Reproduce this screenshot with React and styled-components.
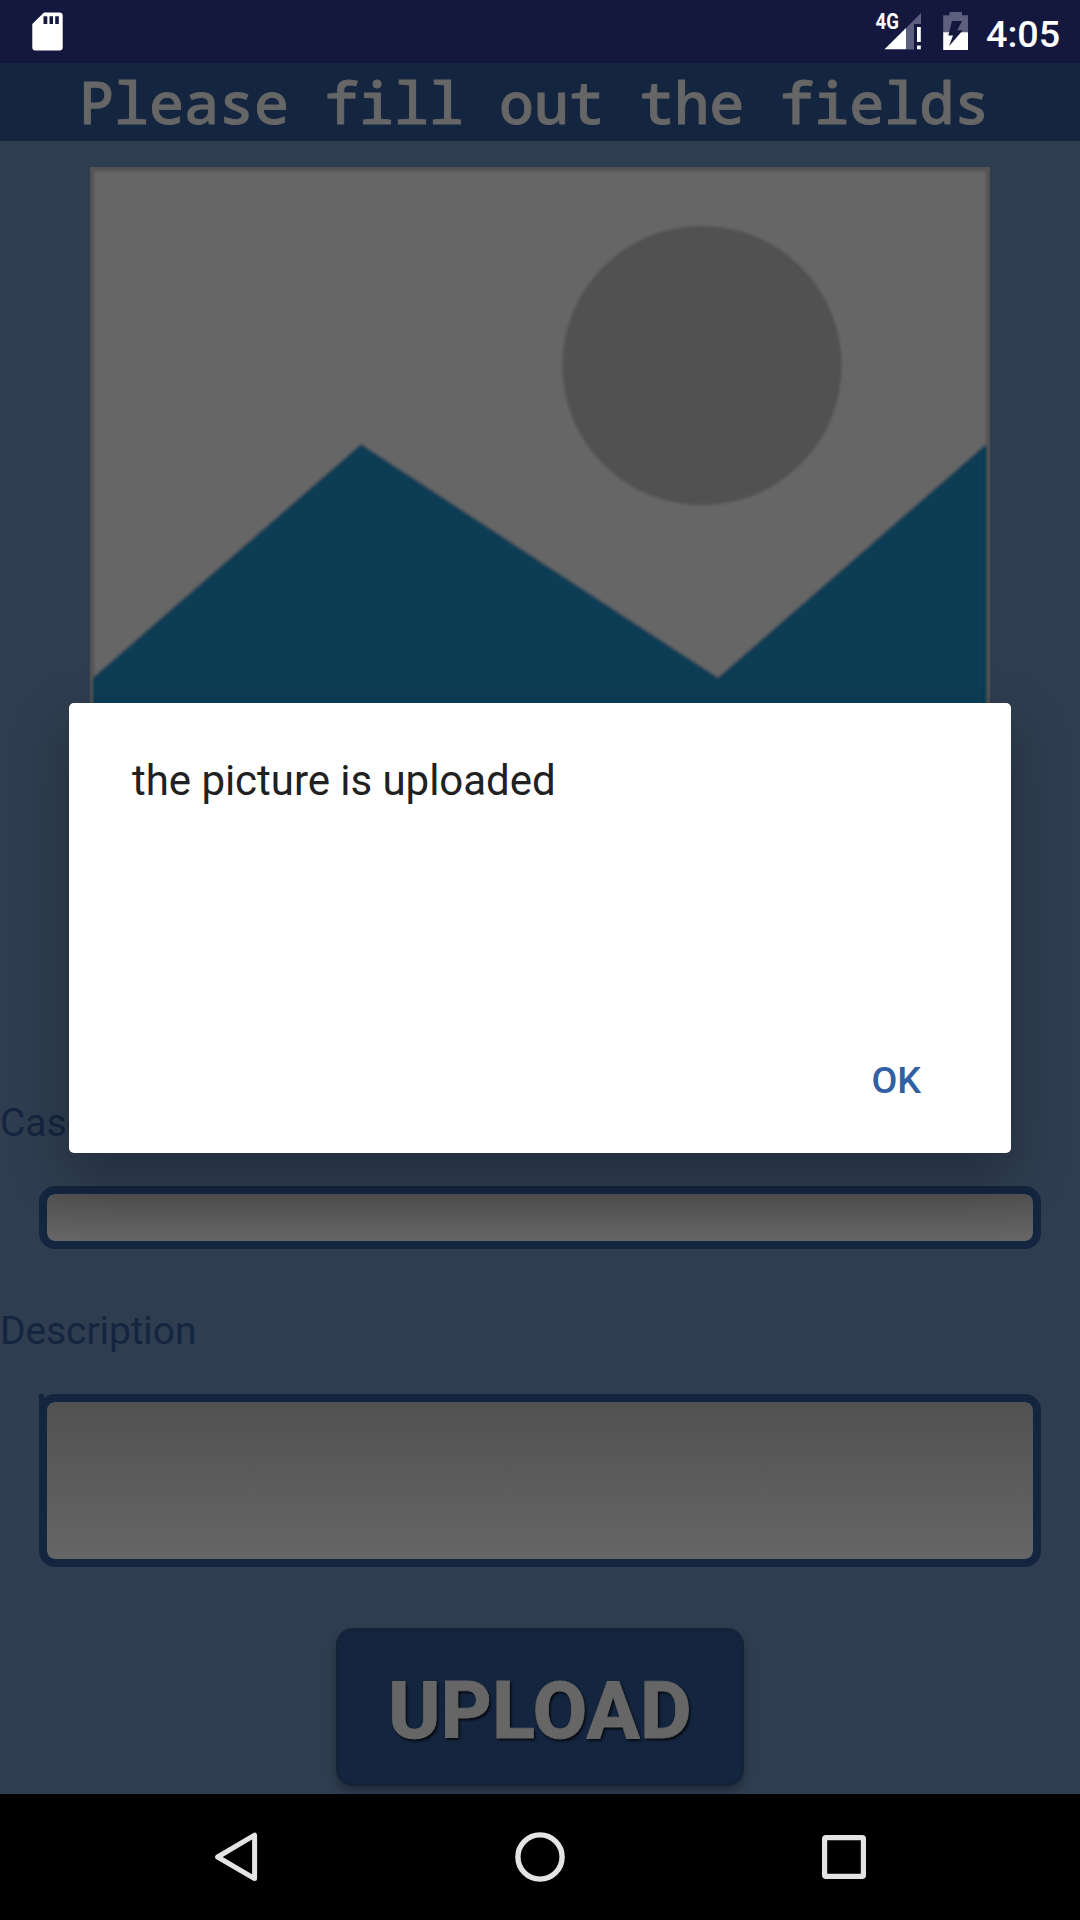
import React from "react";
import styled, { createGlobalStyle } from "styled-components";

const GlobalStyle = createGlobalStyle`
  * { box-sizing: border-box; }
  body { margin: 0; background: #000; font-family: Roboto, sans-serif; }
`;

const Screen = styled.div`
  position: relative;
  width: 1080px;
  height: 1920px;
  display: flex;
  flex-direction: column;
  overflow: hidden;
  background: #2f3d50;
`;

const StatusBar = styled.header`
  flex: none;
  height: 63px;
  padding: 0 21px 0 32px;
  display: flex;
  justify-content: space-between;
  background: #14183f;
  svg { display: block; }
`;

const StatusGroup = styled.div`
  display: flex;
`;

const Clock = styled.span`
  width: 73px;
  margin-left: 17px;
  padding-top: 11px;
  color: #fff;
  font-size: 37.7px;
  font-weight: 500;
  line-height: 46px;
  white-space: nowrap;
`;

const TitleBar = styled.div`
  flex: none;
  height: 78px;
  padding-left: 79px;
  background: #14253f;
`;

const Title = styled.h1`
  margin: 0;
  color: #666;
  font-family: "Noto Sans Mono", "Droid Sans Mono", "Liberation Mono", monospace;
  font-size: 58.3px;
  font-weight: 500;
  letter-spacing: 0.03px;
  line-height: 78px;
  white-space: pre;
  -webkit-text-stroke: 0.9px #666;
`;

const Form = styled.main`
  flex: 1;
  min-height: 0;
  display: flex;
  flex-direction: column;
  overflow: hidden;
`;

const Preview = styled.svg`
  display: block;
  flex: none;
  width: 900px;
  height: 900px;
  margin: 26px 90px 0;
`;

const Label = styled.label`
  flex: none;
  height: 48px;
  margin-top: ${(p) => p.$gap}px;
  color: #14253f;
  font-size: 39px;
  line-height: 50px;
  letter-spacing: -0.1px;
`;

const Field = styled.div`
  flex: none;
  height: ${(p) => p.$height}px;
  margin: ${(p) => p.$gap}px 39px 0;
  border: 8px solid #14253f;
  border-radius: 16px;
  background: linear-gradient(#515151, #666) padding-box;
  position: relative;
`;

const Caret = styled.i`
  position: absolute;
  left: -8px;
  top: -8px;
  width: 5px;
  height: 24px;
  background: #14253f;
`;

const UploadButton = styled.button`
  flex: none;
  align-self: center;
  width: 408px;
  height: 158px;
  margin: 61px 0 0;
  padding: 8px 0 0;
  border: 3px solid #142338;
  border-radius: 17px;
  background: #14253f;
  box-shadow: 0 5px 8px rgba(0, 0, 0, 0.28);
  color: #666;
  font-family: Roboto, sans-serif;
  font-size: 79px;
  font-weight: 800;
  letter-spacing: 0.2px;
  line-height: 90px;
  text-shadow: 1.5px 1.5px 3px rgba(0, 0, 0, 0.9);
  -webkit-text-stroke: 0.8px #666;
`;

const NavBar = styled.nav`
  flex: none;
  height: 126px;
  padding: 38px 214px 0;
  display: flex;
  justify-content: space-between;
  background: #000;
  svg { display: block; }
`;

const Dialog = styled.section`
  position: absolute;
  left: 69px;
  top: 703px;
  width: 942px;
  height: 450px;
  padding: 53px 63px 48px;
  display: flex;
  flex-direction: column;
  justify-content: space-between;
  border-radius: 5px;
  background: #fff;
  box-shadow: 0 24px 56px rgba(0, 0, 0, 0.26);
`;

const Message = styled.p`
  margin: 0;
  color: #212121;
  font-size: 42px;
  line-height: 50px;
  letter-spacing: -0.04px;
`;

const OkButton = styled.button`
  align-self: flex-end;
  margin: 0 27px 0 0;
  padding: 0;
  border: 0;
  background: none;
  color: #3261a3;
  font-family: Roboto, sans-serif;
  font-size: 37.5px;
  font-weight: 500;
  line-height: 50px;
`;

const SdCardIcon = () => (
  <svg width="32" height="63" viewBox="32 0 32 63">
    <path fill="#fff" fillRule="evenodd" d="M44 12.4H59.4A3.3 3.3 0 0 1 62.7 15.7V47.3A3.3 3.3 0 0 1 59.4 50.6H35.6A3.3 3.3 0 0 1 32.3 47.3V24ZM43.5 16.3V24H47.3V16.3ZM49.5 16.3V24H53V16.3ZM55.2 16.3V24H58.8V16.3Z" />
  </svg>
);

const SignalIcon = () => (
  <svg width="46" height="63" viewBox="875 0 46 63">
    <text x="875.5" y="29" textLength="23.4" lengthAdjust="spacingAndGlyphs" fill="#fff" fontFamily="Roboto, sans-serif" fontSize="22" fontWeight="700">4G</text>
    <path fill="#5c5f7d" d="M906 28 921.3 12.8V24H914V49.5H906Z" />
    <path fill="#fff" d="M884.5 49.3 906 28V49.3ZM917 27H920.8V42H917ZM917 45.4H920.8V49.3H917Z" />
  </svg>
);

const BatteryIcon = () => (
  <svg width="26" height="63" viewBox="943 0 26 63" style={{ marginLeft: 22 }}>
    <path fill="#5c5f7d" d="M949.5 12H962V15.3H968V33H943.2V15.3H949.5Z" />
    <path fill="#fff" d="M943.2 32.3H968V50H943.2Z" />
    <path fill="#14183f" d="M952 21H962L957.2 30.3H962.8L949 46.3 953 35.6H948.3Z" />
  </svg>
);

const Placeholder = () => (
  <Preview viewBox="0 0 900 900">
    <defs>
      <filter id="edge" x="-5%" y="-5%" width="110%" height="110%"><feGaussianBlur stdDeviation="1.4" /></filter>
      <clipPath id="frame"><path d="M0 0H900V900H0Z" /></clipPath>
    </defs>
    <path fill="#525252" d="M0 0H900V900H0Z" />
    <g clipPath="url(#frame)" filter="url(#edge)">
      <path fill="#666" d="M4 4H896V896H4Z" />
      <circle cx="612" cy="198.5" r="139.8" fill="#515151" />
      <path fill="#0e3e54" d="M4 509.5 271 277 628 510.5 896 277V896H4Z" />
      <path fill="none" stroke="#053b55" strokeWidth="3" d="M894.5 280V896M5 512V896" />
    </g>
  </Preview>
);

export default function App() {
  return (
    <>
      <GlobalStyle />
      <Screen>
        <StatusBar>
          <SdCardIcon />
          <StatusGroup>
            <SignalIcon />
            <BatteryIcon />
            <Clock>4:05</Clock>
          </StatusGroup>
        </StatusBar>
        <TitleBar>
          <Title>Please fill out the fields</Title>
        </TitleBar>
        <Form>
          <Placeholder />
          <Label $gap={31}>Case</Label>
          <Field $gap={40} $height={63} />
          <Label $gap={57}>Description</Label>
          <Field $gap={40} $height={173}>
            <Caret />
          </Field>
          <UploadButton>UPLOAD</UploadButton>
        </Form>
        <NavBar>
          <svg width="44" height="50" viewBox="214 1832 44 50">
            <path d="M254.6 1835.2V1878.6L217.6 1857Z" fill="none" stroke="#e4e4e4" strokeWidth="5" strokeLinejoin="round" />
          </svg>
          <svg width="50" height="50" viewBox="0 0 50 50">
            <circle cx="25" cy="25" r="22.1" fill="none" stroke="#e4e4e4" strokeWidth="5.4" />
          </svg>
          <svg width="44" height="50" viewBox="0 0 44 50">
            <rect x="2.6" y="5.6" width="38.8" height="38.8" rx="1.2" fill="none" stroke="#e4e4e4" strokeWidth="5.2" />
          </svg>
        </NavBar>
        <Dialog role="dialog">
          <Message>the picture is uploaded</Message>
          <OkButton>OK</OkButton>
        </Dialog>
      </Screen>
    </>
  );
}
